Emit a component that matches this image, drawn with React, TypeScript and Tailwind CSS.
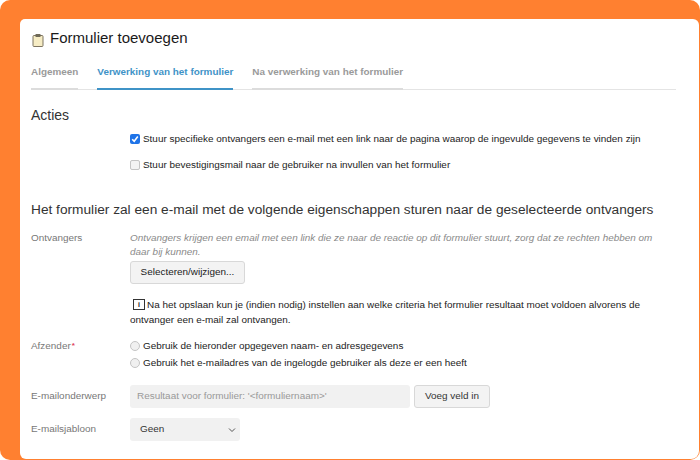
export default function App() {
  return (
    <div className="w-[700px] h-[460px] bg-white overflow-hidden font-['Liberation_Sans',Arial,sans-serif]">
      <div className="w-full h-full rounded-[10px] bg-[#ff8030] pl-[20px] pt-[19px] pr-px pb-px">
        <div className="w-full h-full bg-white rounded-tl-[5px] rounded-tr-[6px] rounded-bl-[6px] rounded-br-[8px] overflow-hidden">
          <div className="flex items-center h-[38px] pl-[12px] gap-[6px]">
            <svg width="12" height="14" viewBox="0 0 12 14" className="mt-[3px]">
              <rect x="1" y="2.5" width="10" height="11" rx="1" fill="#f6ecc4" stroke="#7d7460" strokeWidth="1" />
              <rect x="3.5" y="1" width="5" height="3" rx="0.5" fill="#6f6a58" />
            </svg>
            <span className="text-[15px] leading-[20px] text-[#1a1a1a]">Formulier toevoegen</span>
          </div>
          <div className="flex mx-[11px] mr-[23px] h-[33px] border-b border-[#e4e4e4] gap-[19px] text-[9.92px] font-bold">
            <div className="h-[33px] border-b-2 border-[#dcdcdc] text-[#9a9a9a] pt-[8px] leading-[13px]">Algemeen</div>
            <div className="h-[33px] border-b-2 border-[#3f93c7] text-[#3f93c7] pt-[8px] leading-[13px]">Verwerking van het formulier</div>
            <div className="h-[33px] border-b-2 border-[#dcdcdc] text-[#9a9a9a] pt-[8px] leading-[13px]">Na verwerking van het formulier</div>
          </div>
          <div className="pl-[11px] text-[9.94px] text-[#222]">
            <h2 className="text-[14px] leading-[16px] text-[#333] mt-[17px] font-normal">Acties</h2>
            <div className="ml-[99px] mt-[8px] flex items-center gap-[3px] h-[16px]">
              <span className="w-[10px] h-[10px] rounded-[2px] bg-[#1f74e8] flex items-center justify-center">
                <svg width="8" height="8" viewBox="0 0 8 8"><path d="M1.2 4.2 L3.2 6.2 L6.8 1.6" fill="none" stroke="#fff" strokeWidth="1.6" /></svg>
              </span>
              <span>Stuur specifieke ontvangers een e-mail met een link naar de pagina waarop de ingevulde gegevens te vinden zijn</span>
            </div>
            <div className="ml-[99px] mt-[10px] flex items-center gap-[3px] h-[16px]">
              <span className="w-[10px] h-[10px] rounded-[2px] bg-[#f3f3f3] border border-[#c4c4c4]" />
              <span>Stuur bevestigingsmail naar de gebruiker na invullen van het formulier</span>
            </div>
            <h2 className="text-[13.7px] leading-[16px] text-[#333] mt-[29px] font-normal whitespace-nowrap">Het formulier zal een e-mail met de volgende eigenschappen sturen naar de geselecteerde ontvangers</h2>
            <div className="flex mt-[13px]">
              <div className="w-[99px] text-[#777] leading-[14px]">Ontvangers</div>
              <div className="w-[530px]">
                <p className="italic text-[#8a8a8a] leading-[14px]">Ontvangers krijgen een email met een link die ze naar de reactie op dit formulier stuurt, zorg dat ze rechten hebben om daar bij kunnen.</p>
                <button className="block mt-[2px] w-[115px] h-[23px] rounded-[3px] bg-[#f3f3f3] border border-[#d8d8d8] text-[#222] text-[9.94px]">Selecteren/wijzigen...</button>
                <p className="mt-[13px] leading-[15px] text-[#222] whitespace-nowrap">
                  <span className="inline-flex align-[1px] items-center justify-center w-[12px] h-[11px] ml-[3px] mr-[2px] border border-[#333] text-[7px] leading-[9px] font-bold">i</span>
                  Na het opslaan kun je (indien nodig) instellen aan welke criteria het formulier resultaat moet voldoen alvorens de
                  <br />
                  ontvanger een e-mail zal ontvangen.
                </p>
              </div>
            </div>
            <div className="flex mt-[10px]">
              <div className="w-[99px] text-[#777] leading-[16px] pt-px">Afzender<span className="text-[#e0405a] text-[8px] font-bold align-top ml-px">*</span></div>
              <div className="flex flex-col gap-[1px] mt-px">
                <label className="flex items-center gap-[3px] h-[16px]">
                  <span className="w-[10px] h-[10px] rounded-full bg-[#f0f0f0] border border-[#c4c4c4]" />
                  <span>Gebruik de hieronder opgegeven naam- en adresgegevens</span>
                </label>
                <label className="flex items-center gap-[3px] h-[16px]">
                  <span className="w-[10px] h-[10px] rounded-full bg-[#f0f0f0] border border-[#c4c4c4]" />
                  <span>Gebruik het e-mailadres van de ingelogde gebruiker als deze er een heeft</span>
                </label>
              </div>
            </div>
            <div className="flex items-center mt-[14px] h-[23px]">
              <div className="w-[99px] text-[#777]">E-mailonderwerp</div>
              <div className="w-[280px] h-[23px] rounded-[3px] bg-[#f1f1f1] flex items-center pl-[7px] text-[#999]">Resultaat voor formulier: '&lt;formuliernaam&gt;'</div>
              <button className="ml-[4px] w-[76px] h-[23px] rounded-[3px] bg-[#f3f3f3] border border-[#d8d8d8] text-[#333] text-[9.94px]">Voeg veld in</button>
            </div>
            <div className="flex items-center mt-[10px] h-[23px]">
              <div className="w-[99px] text-[#777]">E-mailsjabloon</div>
              <div className="w-[110px] h-[23px] rounded-[3px] bg-[#f1f1f1] flex items-center justify-between pl-[10px] pr-[4px] text-[#333]">
                <span>Geen</span>
                <svg width="8" height="6" viewBox="0 0 8 6"><path d="M1 1.5 L4 4.5 L7 1.5" fill="none" stroke="#555" strokeWidth="1" /></svg>
              </div>
            </div>
          </div>
        </div>
      </div>
    </div>
  );
}
